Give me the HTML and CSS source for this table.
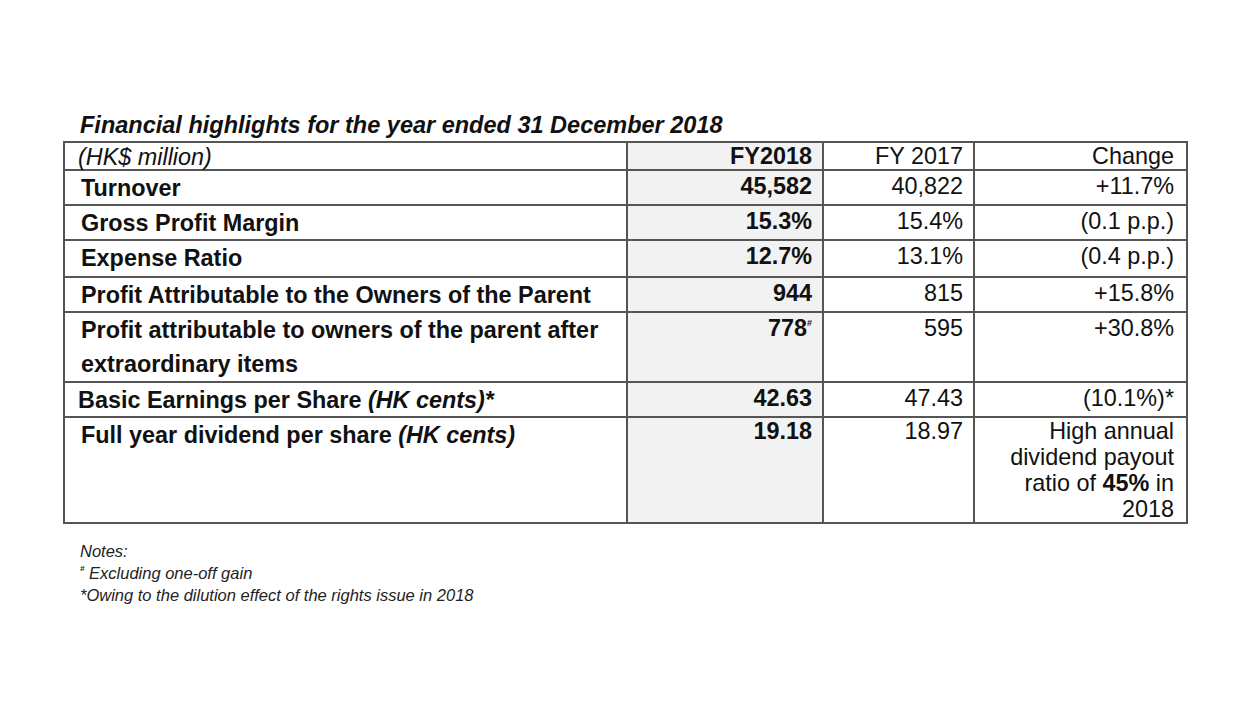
FILE: index.html
```html
<!DOCTYPE html>
<html lang="en">
<head>
<meta charset="utf-8">
<title>Financial highlights 2018</title>
<link rel="stylesheet" href="styles.css">
</head>
<body>
<main class="page">
  <h1 class="title">Financial highlights for the year ended 31 December 2018</h1>
  <table class="fin">
    <colgroup>
      <col class="c-label">
      <col class="c-fy18">
      <col class="c-fy17">
      <col class="c-chg">
    </colgroup>
    <tr class="r-head">
      <td class="lbl lbl-tight"><em>(HK$ million)</em></td>
      <td class="num hl"><strong>FY2018</strong></td>
      <td class="num">FY 2017</td>
      <td class="num chg">Change</td>
    </tr>
    <tr class="r-35">
      <td class="lbl"><strong>Turnover</strong></td>
      <td class="num hl"><strong>45,582</strong></td>
      <td class="num">40,822</td>
      <td class="num chg">+11.7%</td>
    </tr>
    <tr class="r-35">
      <td class="lbl"><strong>Gross Profit Margin</strong></td>
      <td class="num hl"><strong>15.3%</strong></td>
      <td class="num">15.4%</td>
      <td class="num chg">(0.1 p.p.)</td>
    </tr>
    <tr class="r-37">
      <td class="lbl"><strong>Expense Ratio</strong></td>
      <td class="num hl"><strong>12.7%</strong></td>
      <td class="num">13.1%</td>
      <td class="num chg">(0.4 p.p.)</td>
    </tr>
    <tr class="r-35">
      <td class="lbl"><strong>Profit Attributable to the Owners of the Parent</strong></td>
      <td class="num hl"><strong>944</strong></td>
      <td class="num">815</td>
      <td class="num chg">+15.8%</td>
    </tr>
    <tr class="r-70">
      <td class="lbl"><strong>Profit attributable to owners of the parent after extraordinary items</strong></td>
      <td class="num hl"><strong>778<sup class="mark">#</sup></strong></td>
      <td class="num">595</td>
      <td class="num chg">+30.8%</td>
    </tr>
    <tr class="r-35">
      <td class="lbl lbl-tight"><strong>Basic Earnings per Share <em>(HK cents)*</em></strong></td>
      <td class="num hl"><strong>42.63</strong></td>
      <td class="num">47.43</td>
      <td class="num chg">(10.1%)*</td>
    </tr>
    <tr class="r-106">
      <td class="lbl"><strong>Full year dividend per share <em>(HK cents)</em></strong></td>
      <td class="num hl"><strong>19.18</strong></td>
      <td class="num">18.97</td>
      <td class="num chg">High annual dividend payout ratio of <strong>45%</strong> in 2018</td>
    </tr>
  </table>
  <div class="notes">
    <p>Notes:</p>
    <p><sup class="mark">#</sup> Excluding one-off gain</p>
    <p>*Owing to the dilution effect of the rights issue in 2018</p>
  </div>
</main>
</body>
</html>
```

FILE: styles.css
```css
html, body {
  margin: 0;
  padding: 0;
  background: #ffffff;
}

body {
  font-family: "Liberation Sans", Arial, sans-serif;
  color: #111111;
}

.page {
  padding: 112px 0 0 63px;
}

.title {
  margin: 0 0 3px 0;
  padding-left: 17px;
  font-size: 23.5px;
  line-height: 26px;
  font-weight: bold;
  font-style: italic;
  color: #111111;
}

.fin {
  border-collapse: collapse;
  table-layout: fixed;
  width: 1123px;
  font-size: 23.4px;
}

.c-label { width: 563px; }
.c-fy18 { width: 196px; }
.c-fy17 { width: 151px; }
.c-chg { width: 213px; }

.fin td {
  border: 2px solid #555555;
  vertical-align: top;
  padding: 0;
}

.r-head { height: 28px; }
.r-35 { height: 35px; }
.r-37 { height: 37px; }
.r-70 { height: 70px; }
.r-106 { height: 106px; }

.lbl {
  padding: 1px 10px 0 16px !important;
  line-height: 32px;
  text-align: left;
}

.r-70 .lbl {
  padding-top: 0 !important;
  line-height: 34px;
}

.r-head .lbl {
  padding-top: 2px !important;
  line-height: 24px;
}

.lbl-tight {
  padding-left: 13px !important;
}

.num {
  padding: 2px 10px 0 8px !important;
  line-height: 26px;
  text-align: right;
}

.r-head .num {
  padding-top: 1px !important;
  line-height: 25px;
}

.r-106 .num {
  padding-top: 0 !important;
}

.chg {
  padding-right: 12px !important;
}

.hl {
  background: #f2f2f2;
}

.mark {
  font-size: 9px;
  vertical-align: top;
  line-height: 1;
  position: relative;
  top: 4px;
  font-weight: bold;
}

.notes {
  margin-top: 16px;
  padding-left: 17px;
  font-size: 16.5px;
  line-height: 22px;
  font-style: italic;
  color: #222222;
}

.notes p {
  margin: 0;
}

.notes .mark {
  font-size: 8px;
  top: 3px;
}
```
